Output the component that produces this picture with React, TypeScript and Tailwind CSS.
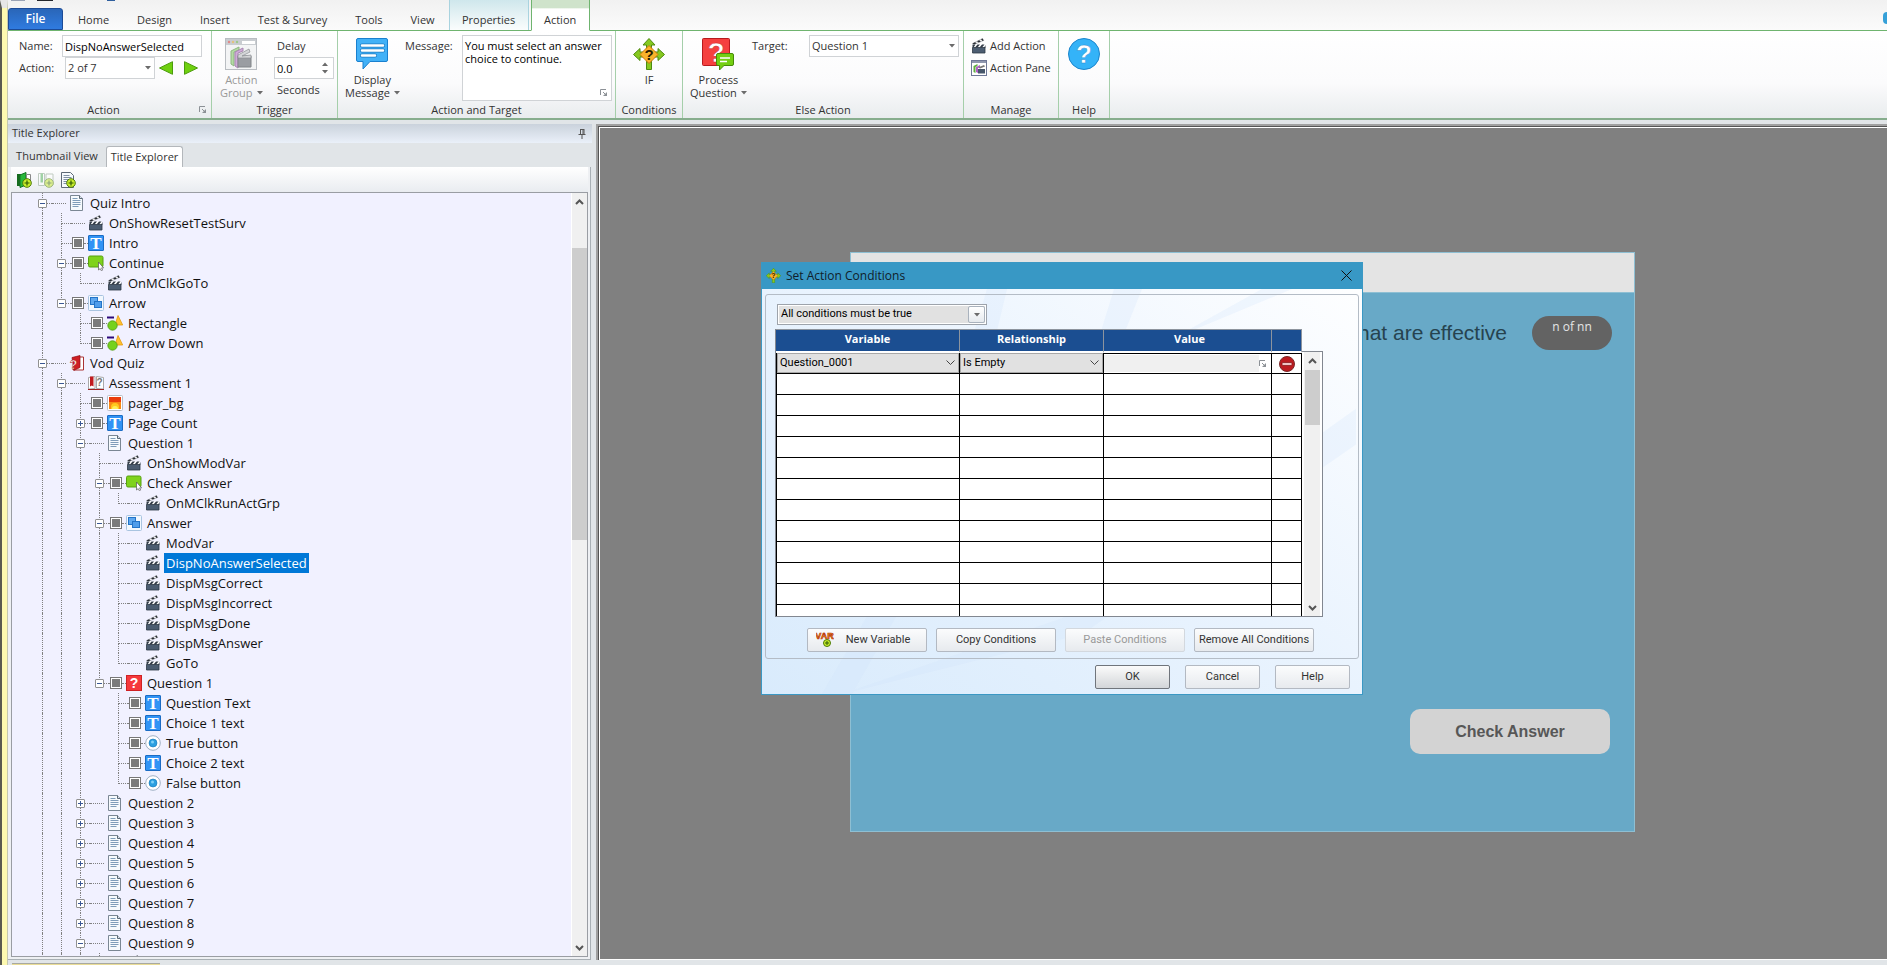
import type { ReactNode } from 'react'

type IconName =
  | 'doc'
  | 'clap'
  | 'text'
  | 'button'
  | 'group'
  | 'shape'
  | 'quiz'
  | 'assessment'
  | 'picture'
  | 'question'
  | 'radio'

type Row = {
  depth: number
  label: string
  icon: IconName
  toggle?: '+' | '-'
  box?: boolean
  selected?: boolean
}

const rows: Row[] = [
  { depth: 0, label: 'Quiz Intro', icon: 'doc', toggle: '-' },
  { depth: 1, label: 'OnShowResetTestSurv', icon: 'clap' },
  { depth: 1, label: 'Intro', icon: 'text', box: true },
  { depth: 1, label: 'Continue', icon: 'button', toggle: '-', box: true },
  { depth: 2, label: 'OnMClkGoTo', icon: 'clap' },
  { depth: 1, label: 'Arrow', icon: 'group', toggle: '-', box: true },
  { depth: 2, label: 'Rectangle', icon: 'shape', box: true },
  { depth: 2, label: 'Arrow Down', icon: 'shape', box: true },
  { depth: 0, label: 'Vod Quiz', icon: 'quiz', toggle: '-' },
  { depth: 1, label: 'Assessment 1', icon: 'assessment', toggle: '-' },
  { depth: 2, label: 'pager_bg', icon: 'picture', box: true },
  { depth: 2, label: 'Page Count', icon: 'text', toggle: '+', box: true },
  { depth: 2, label: 'Question 1', icon: 'doc', toggle: '-' },
  { depth: 3, label: 'OnShowModVar', icon: 'clap' },
  { depth: 3, label: 'Check Answer', icon: 'button', toggle: '-', box: true },
  { depth: 4, label: 'OnMClkRunActGrp', icon: 'clap' },
  { depth: 3, label: 'Answer', icon: 'group', toggle: '-', box: true },
  { depth: 4, label: 'ModVar', icon: 'clap' },
  { depth: 4, label: 'DispNoAnswerSelected', icon: 'clap', selected: true },
  { depth: 4, label: 'DispMsgCorrect', icon: 'clap' },
  { depth: 4, label: 'DispMsgIncorrect', icon: 'clap' },
  { depth: 4, label: 'DispMsgDone', icon: 'clap' },
  { depth: 4, label: 'DispMsgAnswer', icon: 'clap' },
  { depth: 4, label: 'GoTo', icon: 'clap' },
  { depth: 3, label: 'Question 1', icon: 'question', toggle: '-', box: true },
  { depth: 4, label: 'Question Text', icon: 'text', box: true },
  { depth: 4, label: 'Choice 1 text', icon: 'text', box: true },
  { depth: 4, label: 'True button', icon: 'radio', box: true },
  { depth: 4, label: 'Choice 2 text', icon: 'text', box: true },
  { depth: 4, label: 'False button', icon: 'radio', box: true },
  { depth: 2, label: 'Question 2', icon: 'doc', toggle: '+' },
  { depth: 2, label: 'Question 3', icon: 'doc', toggle: '+' },
  { depth: 2, label: 'Question 4', icon: 'doc', toggle: '+' },
  { depth: 2, label: 'Question 5', icon: 'doc', toggle: '+' },
  { depth: 2, label: 'Question 6', icon: 'doc', toggle: '+' },
  { depth: 2, label: 'Question 7', icon: 'doc', toggle: '+' },
  { depth: 2, label: 'Question 8', icon: 'doc', toggle: '+' },
  { depth: 2, label: 'Question 9', icon: 'doc', toggle: '-' },
  { depth: 3, label: '', icon: 'clap' },
]

// true when the branch at this level goes on below row i
function continues(i: number, level: number) {
  const next = rows.slice(i + 1).find((r) => r.depth <= level)
  return next ? next.depth === level : true
}

function Clapper({ size = 16 }: { size?: number }) {
  return (
    <svg width={size} height={size} viewBox="0 0 16 16" className="shrink-0">
      <path d="M1.500 5.500 11.500.5l1.200 2-9.700 4z" fill="#f2f2f2" stroke="#8a8f96" strokeWidth=".5" />
      <path d="M1.500 5.500 4 4.200l1.700 1.100L3 6.500zM6 3.200l2.200-1 1.700 1.200-2.200 1zM10 1.200l1.500-.7 1.200 2-1.200.4z" fill="#2a2e34" />
      <path d="M1.500 6.500h12.500V10H1.500z" fill="#fff" />
      <path d="M1.500 6.500h3L2.500 9.500h-1zM6.500 6.500h2.500l-2.500 3H4zM11 6.500h2.500l-2.500 3H8.500zM14.500 7v3H13z" fill="#333c48" />
      <path d="M1.500 9.500h12.500V15H1.500z" fill="#4c5d71" stroke="#2c3744" strokeWidth=".8" />
    </svg>
  )
}

function QuestionArrows({ size }: { size: number }) {
  return (
    <svg width={size} height={size} viewBox="0 0 32 32" className="shrink-0">
      <path d="m16 .5 6 6.500h-3.500v18h-5V7H10z" fill="#86c920" stroke="#4e8a10" />
      <path d="M13.500 24h5v7.500h-5z" fill="#86c920" stroke="#4e8a10" />
      <path d="m.5 16.500 6.500-6v3.500h18v-3.500l6.500 6-6.500 6V19H7v3.500z" fill="#86c920" stroke="#4e8a10" />
      <path d="m16 7.500 9 9-9 9-9-9z" fill="#fbb22a" stroke="#c9790e" strokeWidth="1" />
      <text x="16" y="22" textAnchor="middle" fontFamily="Liberation Sans" fontWeight="700" fontSize="15" fill="#2b1c00">
        ?
      </text>
    </svg>
  )
}

function TreeIcon({ name }: { name: IconName }) {
  if (name === 'clap') return <Clapper />
  return (
    <svg width="16" height="16" viewBox="0 0 16 16" className="shrink-0">
      {name === 'doc' && (
        <>
          <path d="M1.500.5h9l3 3v12h-12z" fill="#f6fafd" stroke="#7b8794" />
          <path d="M10.500.5v3h3" fill="#dde5ec" stroke="#5c6875" />
          <path d="M3.500 5.500h8M3.500 7.500h8M3.500 9.500h8M3.500 11.500h6M3.500 3.500h5" stroke="#7f9db9" />
        </>
      )}
      {name === 'text' && (
        <>
          <rect x=".5" y=".5" width="15" height="15" rx=".5" fill="#3193f5" stroke="#1b6cc4" />
          <text x="8" y="13.500" textAnchor="middle" fontFamily="Liberation Serif" fontWeight="700" fontSize="17" fill="#fff">
            T
          </text>
        </>
      )}
      {name === 'button' && (
        <>
          <rect x=".5" y="1" width="14.500" height="11" rx="1.500" fill="#7fd21c" stroke="#57a010" />
          <path d="M10.500 7v8l1.700-1.400 1.200 2.200 1.200-.7-1-2.200h2z" fill="#fff" stroke="#555" strokeWidth=".7" />
        </>
      )}
      {name === 'group' && (
        <>
          <rect x=".5" y=".5" width="15" height="15" rx="1" fill="#f2f8fe" stroke="#a9c4e0" />
          <rect x="2.500" y="2.500" width="7" height="7" fill="#5fa8ef" stroke="#2374c8" />
          <rect x="6.500" y="6.500" width="7" height="6" fill="#4f9deb" stroke="#2374c8" />
        </>
      )}
      {name === 'shape' && (
        <>
          <path d="M0 2.500h7" stroke="#2d0a7a" strokeWidth="2" />
          <path d="m11 .5 4.700 9.500H8z" fill="#fdc32f" stroke="#e69a10" strokeWidth=".8" />
          <circle cx="5.500" cy="10.500" r="4.700" fill="#76d11d" stroke="#4f9c12" strokeWidth=".8" />
        </>
      )}
      {name === 'quiz' && (
        <>
          <path d="M8 2h6.500v13H4z" fill="#fff" stroke="#a33" />
          <path d="M3 2.500 11 .5v12l-6 2.800z" fill="#cf1f25" stroke="#8f0d12" strokeWidth=".7" />
          <text x="4.500" y="13.500" textAnchor="middle" fontFamily="Liberation Sans" fontWeight="700" fontSize="12" fill="#fff" stroke="#a11" strokeWidth=".4">
            ?
          </text>
        </>
      )}
      {name === 'assessment' && (
        <>
          <path d="M.5 2.500 7 1.500v12l-6.500.5zM15.500 2.500 8.500 1.500v12l7 .5z" fill="#fff" stroke="#a9a9a9" />
          <path d="M2 1.500h3.500v10l-1.700-1-1.800 1z" fill="#c11a1f" />
          <path d="M0 14.500h16" stroke="#a02020" />
          <text x="11.500" y="11" textAnchor="middle" fontFamily="Liberation Sans" fontWeight="700" fontSize="10" fill="#777">
            ?
          </text>
        </>
      )}
      {name === 'picture' && (
        <>
          <rect x=".5" y=".5" width="15" height="15" rx="1" fill="#fff" stroke="#b9bec6" />
          <rect x="2" y="2" width="12" height="12" fill="#ea3c0c" />
          <path d="M2 7h12v7H2z" fill="#f88a14" />
          <path d="M4 14v-2a4 4 0 0 1 8 0v2z" fill="#ffc81e" />
          <path d="M5 14a3 3 0 0 1 6 0z" fill="#ffef5a" />
        </>
      )}
      {name === 'question' && (
        <>
          <rect x=".5" y=".5" width="15" height="15" fill="#f5393c" stroke="#cf2124" />
          <text x="8" y="13" textAnchor="middle" fontFamily="Liberation Sans" fontWeight="700" fontSize="14" fill="#fff">
            ?
          </text>
        </>
      )}
      {name === 'radio' && (
        <>
          <circle cx="8" cy="8" r="7.300" fill="#fff" stroke="#9fb0c4" />
          <circle cx="8" cy="8" r="4" fill="#2b9fe0" stroke="#1677bb" strokeWidth=".6" />
          <circle cx="7.500" cy="7" r="1.500" fill="#7fd0f7" />
        </>
      )}
    </svg>
  )
}

function Caret() {
  return (
    <svg width="6" height="4" viewBox="0 0 6 4" className="inline-block shrink-0">
      <path d="M0 0h6L3 3.500z" fill="#6b6b6b" />
    </svg>
  )
}

function Chevron({ up = false }: { up?: boolean }) {
  return (
    <svg width="9" height="6" viewBox="0 0 9 6" className="shrink-0">
      <path d={up ? 'M1 5l3.500-3.500L8 5' : 'M1 1l3.500 3.500L8 1'} fill="none" stroke="#555" strokeWidth="2" />
    </svg>
  )
}

function Launcher() {
  return (
    <svg width="8" height="8" viewBox="0 0 8 8" className="shrink-0">
      <path d="M.5 6V.5H6M3 3l2.500 2.500" fill="none" stroke="#8c9196" />
      <path d="M7 3v4H3z" fill="#8c9196" />
    </svg>
  )
}

function PlusBadge() {
  return (
    <>
      <circle cx="11" cy="11" r="4.300" fill="#c9ee2a" stroke="#4c7a0a" />
      <path d="M11 8.500v5M8.500 11h5" stroke="#2f5a06" strokeWidth="1.200" />
    </>
  )
}

function TreeRow({ row, index }: { row: Row; index: number }) {
  return (
    <li className="flex h-5 shrink-0 items-center">
      {Array.from({ length: row.depth }).map((_, level) => (
        <span key={level} className="flex h-5 w-[19px] pl-[9px]">
          {continues(index, level) && <span className="border-l border-dotted border-[#808080]" />}
        </span>
      ))}
      <span className="relative flex h-5 w-[19px] flex-col pl-[9px]">
        <span className="h-[11px] border-b border-l border-dotted border-[#808080]" />
        {continues(index, row.depth) && <span className="h-[9px] border-l border-dotted border-[#808080]" />}
        {row.toggle && (
          <button
            aria-label={row.toggle === '+' ? 'Expand' : 'Collapse'}
            className="absolute top-[6px] left-[5px] flex size-[9px] items-center justify-center rounded-[1px] border border-[#919191] bg-white"
          >
            <svg width="5" height="5" viewBox="0 0 5 5">
              <path d={row.toggle === '+' ? 'M0 2.500h5M2.500 0v5' : 'M0 2.500h5'} stroke="#3a5794" />
            </svg>
          </button>
        )}
      </span>
      <span className="flex w-[17px] items-center">
        {row.box ? (
          <>
            <span className="w-px border-t border-dotted border-[#808080]" />
            <span className="size-3 border border-[#777] bg-[#7b7b7b] ring-1 ring-white ring-inset" />
            <span className="w-1 border-t border-dotted border-[#808080]" />
          </>
        ) : (
          <span className="w-[14px] border-t border-dotted border-[#808080]" />
        )}
      </span>
      <TreeIcon name={row.icon} />
      <span
        className={
          row.selected
            ? 'ml-[3px] h-5 bg-[#0078d7] px-[2px] text-[13px] leading-5 whitespace-nowrap text-white'
            : 'ml-[3px] h-5 px-[2px] text-[13px] leading-5 whitespace-nowrap text-[#111]'
        }
      >
        {row.label}
      </span>
    </li>
  )
}

function RibbonGroup({ title, className, launcher, children }: { title: string; className: string; launcher?: boolean; children: ReactNode }) {
  return (
    <section className={`flex shrink-0 flex-col border-r border-[#a5cfaa] pt-1 ${className}`}>
      <div className="flex min-h-0 flex-1">{children}</div>
      <div className="flex h-4 items-center">
        <h2 className="flex-1 text-center">{title}</h2>
        {launcher && (
          <button aria-label="More options" className="mr-1">
            <Launcher />
          </button>
        )}
      </div>
    </section>
  )
}

function BigButton({ icon, lines, caret, disabled }: { icon: ReactNode; lines: string[]; caret?: boolean; disabled?: boolean }) {
  return (
    <button
      disabled={disabled}
      className="flex shrink-0 flex-col items-center self-start pt-[3px] leading-[13px] disabled:text-[#999]"
    >
      <span className="mb-[3px] flex h-8">{icon}</span>
      {lines.map((line, i) => (
        <span key={line} className="flex items-center gap-1">
          {line}
          {caret && i === lines.length - 1 && <Caret />}
        </span>
      ))}
    </button>
  )
}

function Ribbon() {
  const tabs = ['Home', 'Design', 'Insert', 'Test & Survey', 'Tools', 'View']
  return (
    <header className="text-[11px] text-[#333]">
      <nav className="relative flex h-[31px] items-stretch border-b border-[#6fb46f] bg-linear-to-b from-[#f1f1f1] to-[#fbfbfb]">
        {/* bottom edge of the quick access toolbar */}
        <svg width="120" height="2" viewBox="0 0 120 2" className="absolute top-0 left-0">
          <path d="M3 0h14v1H3z" fill="#9aa3b5" />
          <path d="M29 0h16v1H29z" fill="#23262c" />
          <path d="M99 0h8v1h-8z" fill="#2f5f9e" />
        </svg>
        <button className="mt-2 w-[55px] rounded-t-[3px] border border-[#1c4b97] bg-linear-to-b from-[#2a66b8] to-[#2f7be0] text-[12px] font-semibold text-white">
          File
        </button>
        <div className="flex pt-[10px] pl-[15px]">
          {tabs.map((tab) => (
            <button key={tab} className="mr-7 whitespace-nowrap last:mr-[14px]">
              {tab}
            </button>
          ))}
        </div>
        <button className="w-20 border-x border-[#a9d3df] bg-linear-to-b from-[#cfe7ec] to-[#fbfdfd] pt-[10px]">Properties</button>
        <button className="-mb-px ml-[2px] w-[59px] border-x border-b border-x-[#6fb46f] border-b-white bg-linear-to-b from-[#cfe3cb] from-25% to-white to-30% pt-[10px]">
          Action
        </button>
        <span className="mt-3 ml-auto h-3 w-1 rounded-l-full bg-[#35a0d8]" />
      </nav>

      <div className="flex h-[89px] overflow-hidden border-b-2 border-[#86ad8d] bg-linear-to-b from-white via-[#fbfbfc] via-60% to-[#e9ecee]">
        <RibbonGroup title="Action" launcher className="w-[204px]">
          <div className="flex flex-col pl-[11px]">
            <div className="flex items-center">
              <label htmlFor="action-name" className="w-[43px]">
                Name:
              </label>
              <input id="action-name" defaultValue="DispNoAnswerSelected" className="h-[22px] w-[140px] border border-[#d0d3d6] bg-white px-[2px] text-black" />
            </div>
            <div className="flex items-center">
              <label htmlFor="action-index" className="w-[46px]">
                Action:
              </label>
              <span className="relative flex items-center">
                <select id="action-index" className="h-[22px] w-[90px] appearance-none border border-[#d0d3d6] bg-white px-[2px]">
                  <option>2 of 7</option>
                </select>
                <span className="pointer-events-none absolute right-1 flex">
                  <Caret />
                </span>
              </span>
              <button aria-label="Previous action" className="ml-1">
                <svg width="14" height="14" viewBox="0 0 14 14">
                  <path d="M.5 7 13.500.7v12.600z" fill="#6fd00f" stroke="#4b9b0c" />
                </svg>
              </button>
              <button aria-label="Next action" className="ml-[11px]">
                <svg width="14" height="14" viewBox="0 0 14 14">
                  <path d="M13.500 7 .5.7v12.600z" fill="#6fd00f" stroke="#4b9b0c" />
                </svg>
              </button>
            </div>
          </div>
        </RibbonGroup>

        <RibbonGroup title="Trigger" className="w-[126px]">
          <div className="flex w-14 pl-2">
            <BigButton
              disabled
              caret
              lines={['Action', 'Group']}
              icon={
                <svg width="32" height="32" viewBox="0 0 32 32">
                  <rect x=".5" y=".5" width="31" height="31" fill="#f3f4f5" stroke="#b9bdc2" />
                  <path d="M1 1h30v6H1z" fill="#c9cdd1" />
                  <circle cx="4" cy="4" r="1.200" fill="#e08a8a" />
                  <circle cx="8" cy="4" r="1.200" fill="#e3c27c" />
                  <circle cx="12" cy="4" r="1.200" fill="#9cc98a" />
                  <path d="M17 3h13v3H17z" fill="#fff" />
                  <path d="m6 13 8-4v3l-5 2v14l-3-2z" fill="#b4dba4" stroke="#8fb783" />
                  <path d="m10 14 8-4v3l-5 2v15l-3-2z" fill="#cfabd8" stroke="#a886b1" />
                  <path d="M13 18h13v11H13z" fill="#9a9da2" stroke="#82858a" />
                  <path d="m13 17 11-6 1 3-8 4 9-1v3H13z" fill="#d4d6d8" stroke="#8b8e92" strokeWidth=".7" />
                </svg>
              }
            />
          </div>
          <div className="flex flex-col pl-[6px]">
            <label htmlFor="delay" className="h-[22px] pl-[3px] leading-[22px]">
              Delay
            </label>
            <span className="relative flex items-center">
              <input id="delay" defaultValue="0.0" className="h-[22px] w-[60px] border border-[#d0d3d6] bg-white px-[2px] text-black" />
              <svg width="6" height="12" viewBox="0 0 6 12" className="pointer-events-none absolute right-[6px]">
                <path d="m0 4 3-3.500L6 4zM0 8h6l-3 3.500z" fill="#6b6b6b" />
              </svg>
            </span>
            <span className="h-[22px] pl-[3px] leading-[22px]">Seconds</span>
          </div>
        </RibbonGroup>

        <RibbonGroup title="Action and Target" className="w-[278px]">
          <div className="flex w-[67px] pl-[7px]">
            <BigButton
              caret
              lines={['Display', 'Message']}
              icon={
                <svg width="32" height="32" viewBox="0 0 32 32">
                  <path d="M2 .5h28q1.500 0 1.500 1.500v20q0 1.500-1.500 1.500H14L7 31v-7.500H2Q.5 23.500.5 22V2Q.5.500 2 .5z" fill="#42b1f7" stroke="#1a80cf" />
                  <path d="M6 7.500h21M6 12.500h21M6 17.500h13" stroke="#1e7cc4" strokeWidth="4" strokeLinecap="round" />
                  <path d="M6 7.500h21M6 12.500h21M6 17.500h13" stroke="#fff" strokeWidth="2.500" strokeLinecap="round" />
                </svg>
              }
            />
          </div>
          <label htmlFor="message" className="w-[57px] leading-[22px]">
            Message:
          </label>
          <span className="relative flex self-start">
            <textarea
              id="message"
              defaultValue={'You must select an answer\nchoice to continue.'}
              className="h-[66px] w-[150px] resize-none overflow-hidden border border-[#d0d3d6] bg-white px-[2px] pt-[3px] leading-[13px] whitespace-pre text-black"
            />
            <span className="absolute right-1 bottom-1">
              <Launcher />
            </span>
          </span>
        </RibbonGroup>

        <RibbonGroup title="Conditions" className="w-[67px]">
          <div className="flex flex-1 justify-center">
            <BigButton lines={['IF']} icon={<QuestionArrows size={32} />} />
          </div>
        </RibbonGroup>

        <RibbonGroup title="Else Action" className="w-[281px]">
          <div className="flex w-[69px] pl-[7px]">
            <BigButton
              caret
              lines={['Process', 'Question']}
              icon={
                <svg width="32" height="32" viewBox="0 0 32 32">
                  <rect x=".5" y=".5" width="27" height="27" rx="1" fill="#f5403f" stroke="#b81a1e" />
                  <text x="14" y="24" textAnchor="middle" fontFamily="Liberation Sans" fontWeight="700" fontSize="28" fill="#fff" stroke="#c22" strokeWidth=".5">
                    ?
                  </text>
                  <path d="M16 15.500h14q1.500 0 1.500 1.500v9q0 1.500-1.500 1.500h-8L17.500 32v-4.500H16q-1.500 0-1.500-1.500v-9q0-1.500 1.500-1.500z" fill="#74cf12" stroke="#478a0a" />
                  <path d="M18 20h10M18 23.500h7" stroke="#fff" strokeWidth="1.500" />
                </svg>
              }
            />
          </div>
          <label htmlFor="target" className="w-[57px] leading-[22px]">
            Target:
          </label>
          <span className="relative flex h-[22px] items-center">
            <select id="target" className="h-[22px] w-[150px] appearance-none border border-[#d0d3d6] bg-white px-[2px]">
              <option>Question 1</option>
            </select>
            <span className="pointer-events-none absolute right-1 flex">
              <Caret />
            </span>
          </span>
        </RibbonGroup>

        <RibbonGroup title="Manage" className="w-[95px]">
          <div className="flex flex-col pl-[7px]">
            <button className="flex h-[22px] items-center gap-[3px] whitespace-nowrap">
              <Clapper />
              Add Action
            </button>
            <button className="flex h-[22px] items-center gap-[3px] whitespace-nowrap">
              <svg width="16" height="16" viewBox="0 0 16 16" className="shrink-0">
                <rect x=".5" y=".5" width="15" height="15" fill="#fff" stroke="#6e7796" />
                <path d="M1 1h14v2H1z" fill="#8f97ae" />
                <path d="m2.500 6 4-2v2L4.500 7v6l-2-1z" fill="#5fae3f" />
                <path d="m5 7 4-2v2L7 8v5l-2-1z" fill="#b05fc4" />
                <path d="M7 9h7v4.500H7z" fill="#46566a" />
                <path d="m7 7.500 6-2.500 1 1.500-5 2z" fill="#777" />
              </svg>
              Action Pane
            </button>
          </div>
        </RibbonGroup>

        <RibbonGroup title="Help" className="w-[51px]">
          <div className="flex flex-1 justify-center pt-[3px]">
            <button aria-label="Help" className="flex h-8">
              <svg width="32" height="32" viewBox="0 0 32 32">
                <circle cx="16" cy="16" r="15.500" fill="#34b3f8" stroke="#1c85cc" />
                <text x="16" y="25" textAnchor="middle" fontFamily="Liberation Sans" fontWeight="700" fontSize="26" fill="#fff" stroke="#1c85cc" strokeWidth=".4">
                  ?
                </text>
              </svg>
            </button>
          </div>
        </RibbonGroup>
      </div>
    </header>
  )
}

function Explorer() {
  return (
    <aside className="flex w-[584px] shrink-0 flex-col text-[11px] text-[#333]">
      <div className="flex h-[19px] items-center justify-between bg-linear-to-b from-[#cad2dc] to-[#eaf0f9] px-1">
        <h2>Title Explorer</h2>
        <button aria-label="Pin" className="mr-[2px]">
          <svg width="8" height="10" viewBox="0 0 8 10">
            <path d="M2.500 0v5.500M5 0v5.500M2 .5h4M.5 5.500h7M4 6v4M6 0v5" stroke="#555" fill="none" />
          </svg>
        </button>
      </div>
      <div className="flex h-6 items-end pl-1">
        <button className="h-[21px] w-[94px] pr-1 whitespace-nowrap">Thumbnail View</button>
        <button className="h-[21px] w-[77px] rounded-t-[3px] border border-b-0 border-[#b3b7bb] bg-white whitespace-nowrap">Title Explorer</button>
      </div>
      <div className="mr-px flex min-h-0 flex-1 flex-col border-r border-b border-[#a9b0b5] bg-[#eef0f3] pr-[2px] pb-[2px] pl-[3px]">
        <div className="flex h-[25px] shrink-0 items-center gap-[6px] bg-linear-to-b from-white to-[#e9ecf0] pl-[5px]">
          <button aria-label="Add chapter">
            <svg width="16" height="16" viewBox="0 0 16 16">
              <path d="M1 2h4v12H1z" fill="#156b1e" />
              <path d="m4 3 6-2.500V13l-6 2.500z" fill="#28b83a" stroke="#147324" />
              <path d="M10.500 2.500h4V13h-4z" fill="#fff" stroke="#888" />
              <PlusBadge />
            </svg>
          </button>
          <button aria-label="Add section" className="opacity-50">
            <svg width="16" height="16" viewBox="0 0 16 16">
              <path d="M.5 1.500h6v12h-6zM8 2h7v11H8z" fill="#fff" stroke="#8aa08a" />
              <path d="M2.500 1.500h2.500v9H2.500z" fill="#4cae55" />
              <PlusBadge />
            </svg>
          </button>
          <button aria-label="Add page">
            <svg width="16" height="16" viewBox="0 0 16 16">
              <path d="M1.500.5h9l3 3v12h-12z" fill="#f6fafd" stroke="#5c6875" />
              <path d="M3.500 3.500h6M3.500 5.500h8M3.500 7.500h7M3.500 9.500h4M3.500 11.500h3" stroke="#7f8fa3" />
              <PlusBadge />
            </svg>
          </button>
        </div>
        <div className="flex min-h-0 flex-1 border border-[#9a9da3] bg-[#f1f1ff]">
          <ul className="flex min-w-0 flex-1 flex-col overflow-hidden pl-[21px]">
            {rows.map((row, i) => (
              <TreeRow key={i} row={row} index={i} />
            ))}
          </ul>
          <div className="flex w-4 shrink-0 flex-col items-center border-l border-white bg-[#f0f0f0]">
            <span className="flex h-[17px] items-center">
              <Chevron up />
            </span>
            <span className="mt-[38px] h-[292px] w-[15px] bg-[#cdcdcd]" />
            <span className="mt-auto flex h-[17px] items-center">
              <Chevron />
            </span>
          </div>
        </div>
      </div>
    </aside>
  )
}

function Slide() {
  return (
    <section className="flex h-[580px] w-[785px] flex-col border border-[#8ebfd3] bg-[#68a9c7] font-['Liberation_Sans',sans-serif]">
      <div className="h-10 border-b border-[#8ebfd3] bg-[#e4e4e4]" />
      <div className="flex items-center justify-end gap-[25px] pt-[23px] pr-[22px]">
        <p className="text-[21px] text-[#26434f]">that are effective</p>
        <p className="flex h-[34px] w-20 justify-center rounded-full bg-[#636363] pt-[2px] font-['Open_Sans',sans-serif] text-[12px] leading-[18px] text-[#e6e6e6]">n of nn</p>
      </div>
      <button className="mt-auto mr-6 mb-[77px] h-[45px] w-[200px] self-end rounded-[10px] bg-[#d3d3d3] text-[16px] font-bold text-[#575757]">
        Check Answer
      </button>
    </section>
  )
}

function DialogButton({ children, disabled, primary, className = 'w-[75px]' }: { children: ReactNode; disabled?: boolean; primary?: boolean; className?: string }) {
  return (
    <button
      disabled={disabled}
      className={`flex h-6 shrink-0 items-center justify-center rounded-[2px] border bg-linear-to-b whitespace-nowrap text-[#333] disabled:border-[#d3d8de] disabled:text-[#999] ${
        primary ? 'border-[#70757c] from-[#fbfbfb] to-[#d3d6d9]' : 'border-[#b3b9c2] from-[#fbfcfd] to-[#e7eaee]'
      } ${className}`}
    >
      {children}
    </button>
  )
}

function ConditionsTable() {
  return (
    <div className="ml-[9px] flex h-[288px] w-[548px] overflow-hidden border-b border-[#828790]">
      <table className="w-[527px] shrink-0 table-fixed border-separate border-spacing-0 self-start border-l border-[#828790] bg-white">
        <colgroup>
          <col className="w-[184px]" />
          <col className="w-[144px]" />
          <col className="w-[168px]" />
          <col className="w-[30px]" />
        </colgroup>
        <thead>
          <tr className="h-[24px] font-['Open_Sans',sans-serif] leading-[16px] text-white">
            <th className="border border-b-2 border-l-0 border-[#8d949e] border-b-white bg-[#1b4e91] bg-clip-padding p-0 pb-1">Variable</th>
            <th className="border border-b-2 border-l-0 border-[#8d949e] border-b-white bg-[#1b4e91] bg-clip-padding p-0 pb-1">Relationship</th>
            <th className="border border-b-2 border-l-0 border-[#8d949e] border-b-white bg-[#1b4e91] bg-clip-padding p-0 pb-1 pl-1">Value</th>
            <th aria-label="Remove" className="border border-b-2 border-l-0 border-[#8d949e] border-b-white bg-[#1b4e91] bg-clip-padding p-0" />
          </tr>
        </thead>
        <tbody>
          <tr className="h-[21px]">
            <td className="border-r border-b border-l border-black p-0">
              <span className="relative flex items-center">
                <select aria-label="Variable" className="h-5 w-full appearance-none border border-[#a8a8a8] bg-[#e1e1e1] px-[2px] text-black">
                  <option>Question_0001</option>
                </select>
                <svg width="9" height="6" viewBox="0 0 9 6" className="pointer-events-none absolute right-1">
                  <path d="M.5.5l4 4 4-4" fill="none" stroke="#444" />
                </svg>
              </span>
            </td>
            <td className="border-r border-b border-black p-0">
              <span className="relative flex items-center">
                <select aria-label="Relationship" className="h-5 w-full appearance-none border border-[#a8a8a8] bg-[#e1e1e1] px-[2px] text-black">
                  <option>Is Empty</option>
                </select>
                <svg width="9" height="6" viewBox="0 0 9 6" className="pointer-events-none absolute right-1">
                  <path d="M.5.5l4 4 4-4" fill="none" stroke="#444" />
                </svg>
              </span>
            </td>
            <td className="border-t border-r border-b border-black p-0">
              <span className="flex items-center bg-white pr-1">
                <input aria-label="Value" className="h-[17px] w-full min-w-0 bg-[#f0f0f0]" />
                <Launcher />
              </span>
            </td>
            <td className="border-t border-r border-b border-black p-0">
              <button aria-label="Remove condition" className="flex w-full justify-center">
                <svg width="16" height="16" viewBox="0 0 16 16">
                  <circle cx="8" cy="8" r="7.500" fill="#bd1c20" stroke="#7a2a2a" />
                  <rect x="3" y="6.500" width="10" height="3" rx="1" fill="#f0c4c4" stroke="#7d1013" strokeWidth=".7" />
                </svg>
              </button>
            </td>
          </tr>
          {Array.from({ length: 13 }).map((_, i) => (
            <tr key={i} className="h-[21px]">
              <td className="border-r border-b border-l border-black p-0" />
              <td className="border-r border-b border-black p-0" />
              <td className="border-r border-b border-black p-0" />
              <td className="border-r border-b border-black p-0" />
            </tr>
          ))}
        </tbody>
      </table>
      <div className="mt-[22px] flex flex-1 justify-end border-t border-r border-[#828790] bg-white pr-[2px]">
        <div className="flex w-4 flex-col items-center bg-[#f0f0f0]">
          <span className="flex h-[18px] items-center">
            <Chevron up />
          </span>
          <span className="h-[55px] w-[15px] bg-[#cdcdcd]" />
          <span className="mt-auto flex h-4 items-center">
            <Chevron />
          </span>
        </div>
      </div>
    </div>
  )
}

function ConditionsDialog() {
  return (
    <div
      role="dialog"
      aria-label="Set Action Conditions"
      className="absolute top-[262px] left-[761px] w-[602px] border border-[#3b98c4] bg-linear-to-tr from-[#d9ebfc] via-[#e9f3fe] to-white font-[Roboto,sans-serif] text-[11px]"
    >
      <div className="flex h-[26px] items-center bg-[#3898c5] pr-[10px] pb-px pl-1 font-['Open_Sans',sans-serif] text-[12px] text-[#10202a]">
        <QuestionArrows size={15} />
        <h2 className="ml-[5px] flex-1">Set Action Conditions</h2>
        <button aria-label="Close">
          <svg width="11" height="11" viewBox="0 0 11 11">
            <path d="M.5.5l10 10M10.500.5l-10 10" stroke="#111" />
          </svg>
        </button>
      </div>
      <div className="relative px-[3px] pt-[5px] pb-[5px]">
        <svg className="absolute inset-0 size-full" viewBox="0 0 600 406" preserveAspectRatio="none">
          <path d="M245 0h-20L150 250 60 406h30L190 230zM380 0h-28L300 170h12zM500 0l-90 50 120-50zM594 120 300 330 80 406l240-60 274-190z" fill="#cfe4fa" opacity=".25" />
        </svg>
        <div className="relative rounded-[3px] border border-[#b4bcc6] pt-[9px] pb-[6px]">
          <span className="relative mb-1 ml-[11px] flex w-[210px] items-center">
            <select aria-label="Match mode" className="h-[21px] w-full appearance-none border border-[#9da3ab] bg-[#e1e1e1] px-[3px] text-black ring-1 ring-white ring-inset">
              <option>All conditions must be true</option>
            </select>
            <span className="pointer-events-none absolute right-[2px] flex h-[17px] w-[17px] items-center justify-center rounded-[2px] border border-[#a9b2bd] bg-linear-to-b from-white to-[#e6eaee]">
              <Caret />
            </span>
          </span>
          <ConditionsTable />
          <div className="mt-[11px] flex gap-[9px] pl-[41px]">
            <DialogButton className="w-[120px] pr-2">
              <svg width="18" height="18" viewBox="0 0 18 18" className="mr-3 shrink-0">
                <text x="8.500" y="8" textAnchor="middle" fontFamily="Liberation Sans" fontWeight="700" fontSize="9" fill="#f7a81a" stroke="#b8340c" strokeWidth=".7">
                  VAR
                </text>
                <circle cx="11" cy="12" r="3.500" fill="#c9ee2a" stroke="#4c7a0a" />
                <path d="M11 10v4M9 12h4" stroke="#2f5a06" />
              </svg>
              New Variable
            </DialogButton>
            <DialogButton className="w-[120px]">Copy Conditions</DialogButton>
            <DialogButton disabled className="w-[120px]">
              Paste Conditions
            </DialogButton>
            <DialogButton className="w-[120px]">Remove All Conditions</DialogButton>
          </div>
        </div>
        <div className="relative mt-[6px] flex justify-end gap-[15px] pr-[9px]">
          <DialogButton primary>OK</DialogButton>
          <DialogButton>Cancel</DialogButton>
          <DialogButton>Help</DialogButton>
        </div>
      </div>
    </div>
  )
}

export default function App() {
  return (
    <div className="relative flex h-screen overflow-hidden bg-[#e1e5e8] font-['Open_Sans',sans-serif]">
      <div className="w-2 shrink-0 border-t-8 border-r border-l-2 border-t-[#e6e6e6] border-r-[#c5c8b0] border-l-[#5a5a50] bg-[#fdf9b0]" />
      <div className="flex min-w-0 flex-1 flex-col">
        <Ribbon />
        <div className="flex min-h-0 flex-1 pt-1">
          <Explorer />
          <main className="ml-1 flex flex-1 items-center justify-center border-t-2 border-l-2 border-[#a0a0a0] bg-[#808080] pb-[2px] shadow-[inset_1px_1px_0_#555,inset_2px_2px_0_#fff,inset_0_-1px_0_#fff]">
            <Slide />
          </main>
        </div>
        <footer className="flex h-[5px] shrink-0 items-end pl-1">
          <span className="h-[2px] w-[148px] border-t border-[#a9a9a0] bg-[#e9dc96]" />
        </footer>
      </div>
      <ConditionsDialog />
    </div>
  )
}
